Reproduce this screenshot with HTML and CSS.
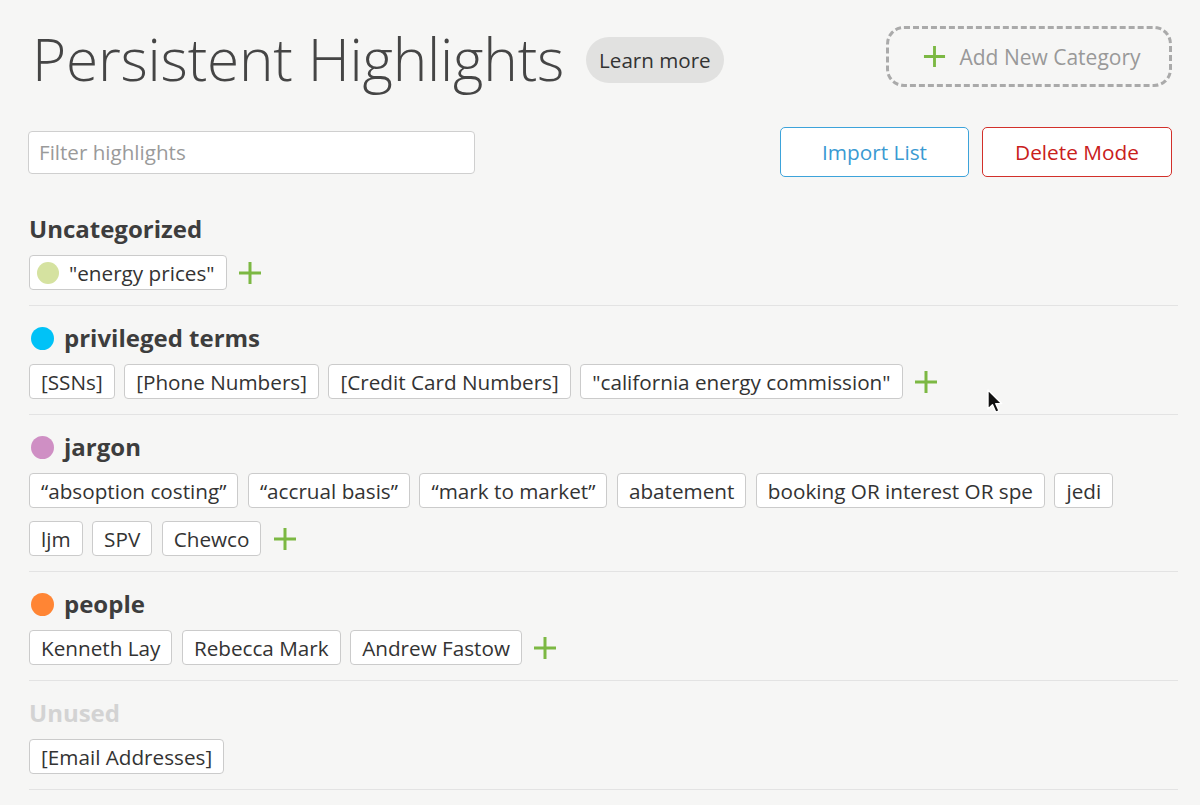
FILE: index.html
```html
<!DOCTYPE html>
<html>
<head>
<meta charset="utf-8">
<link rel="stylesheet" href="styles.css">
</head>
<body>
<div class="page">
  <header class="header">
    <h1 class="title">Persistent Highlights</h1>
    <button class="learn">Learn more</button>
    <div class="spacer"></div>
    <button class="add-cat">
      <svg class="plus" width="24" height="24" viewBox="0 0 24 24"><path d="M12 1v22M1 12h22" stroke="#7cb843" stroke-width="3" fill="none"/></svg>
      <span>Add New Category</span>
    </button>
  </header>

  <div class="toolbar">
    <input class="filter" type="text" placeholder="Filter highlights">
    <div class="spacer"></div>
    <button class="btn btn-import">Import List</button>
    <button class="btn btn-delete">Delete Mode</button>
  </div>

  <section class="section first">
    <h2 class="cat">Uncategorized</h2>
    <div class="tags">
      <span class="tag"><span class="tag-dot" style="background:#d5e2a0"></span>"energy prices"</span>
      <span class="add"><svg width="24" height="24" viewBox="0 0 24 24"><path d="M12 1v22M1 12h22" stroke="#7cb843" stroke-width="3" fill="none"/></svg></span>
    </div>
  </section>

  <section class="section">
    <h2 class="cat"><span class="dot" style="background:#00c2f7"></span>privileged terms</h2>
    <div class="tags">
      <span class="tag">[SSNs]</span>
      <span class="tag">[Phone Numbers]</span>
      <span class="tag">[Credit Card Numbers]</span>
      <span class="tag">"california energy commission"</span>
      <span class="add"><svg width="24" height="24" viewBox="0 0 24 24"><path d="M12 1v22M1 12h22" stroke="#7cb843" stroke-width="3" fill="none"/></svg></span>
    </div>
  </section>

  <section class="section">
    <h2 class="cat"><span class="dot" style="background:#cf8fc4"></span>jargon</h2>
    <div class="tags">
      <span class="tag">“absoption costing”</span>
      <span class="tag">“accrual basis”</span>
      <span class="tag">“mark to market”</span>
      <span class="tag">abatement</span>
      <span class="tag">booking OR interest OR spe</span>
      <span class="tag">jedi</span>
      <span class="tag">ljm</span>
      <span class="tag">SPV</span>
      <span class="tag">Chewco</span>
      <span class="add"><svg width="24" height="24" viewBox="0 0 24 24"><path d="M12 1v22M1 12h22" stroke="#7cb843" stroke-width="3" fill="none"/></svg></span>
    </div>
  </section>

  <section class="section">
    <h2 class="cat"><span class="dot" style="background:#ff8534"></span>people</h2>
    <div class="tags">
      <span class="tag">Kenneth Lay</span>
      <span class="tag">Rebecca Mark</span>
      <span class="tag">Andrew Fastow</span>
      <span class="add"><svg width="24" height="24" viewBox="0 0 24 24"><path d="M12 1v22M1 12h22" stroke="#7cb843" stroke-width="3" fill="none"/></svg></span>
    </div>
  </section>

  <section class="section">
    <h2 class="cat unused">Unused</h2>
    <div class="tags">
      <span class="tag">[Email Addresses]</span>
    </div>
  </section>
</div>

<svg class="cursor" width="20" height="26" viewBox="0 0 20 26">
  <path d="M2 1 L2 20 L6.5 15.8 L9.8 23.2 L13 21.8 L9.8 14.6 L15.6 14.6 Z" fill="#111" stroke="#fff" stroke-width="1.4" stroke-linejoin="round"/>
</svg>
</body>
</html>
```

FILE: styles.css
```css
* { box-sizing: border-box; }

html, body {
  margin: 0;
  padding: 0;
  background: #f6f6f5;
  font-family: "Open Sans", "Liberation Sans", sans-serif;
  color: #333;
}

.page {
  padding: 0 22px 0 29px;
  width: 1200px;
}

.spacer { flex: 1; }

.header {
  display: flex;
  align-items: center;
  height: 113px;
  margin-right: 6px;
}

.title {
  margin: 0 22px 0 3px;
  font-weight: 300;
  font-size: 58.5px;
  line-height: 1;
  color: #454545;
  letter-spacing: -0.2px;
  position: relative;
  top: 2px;
}

.learn {
  font-family: inherit;
  font-size: 20.6px;
  color: #333;
  background: #e1e1e0;
  border: none;
  border-radius: 23px;
  height: 46px;
  padding: 0 13px;
  position: relative;
  top: 3px;
}

.add-cat {
  font-family: inherit;
  display: flex;
  align-items: center;
  gap: 13px;
  width: 286px;
  height: 61px;
  justify-content: center;
  border: 3px dashed #aaaaaa;
  border-radius: 18px;
  background: transparent;
  font-size: 21px;
  color: #999;
  padding: 0 0 0 6px;
}

.add-cat .plus { width: 23px; height: 23px; }

.toolbar {
  display: flex;
  align-items: center;
  gap: 13px;
  height: 50px;
  margin-top: 14px;
  margin-right: 6px;
}

.filter {
  width: 447px;
  height: 43px;
  margin-left: -1px;
  border: 1px solid #cfcfcf;
  border-radius: 4px;
  background: #fff;
  font-family: inherit;
  font-size: 20.6px;
  padding: 0 10px;
  color: #333;
}

.filter::placeholder { color: #9a9a9a; }

.btn {
  font-family: inherit;
  font-size: 20.8px;
  width: 190px;
  height: 50px;
  border-radius: 5px;
  background: #fff;
  border: 1px solid;
}

.btn-import { border-color: #3da3da; color: #3a9ad2; width: 189px; }
.btn-delete { border-color: #d2302a; color: #c9201b; }

.section {
  border-bottom: 1px solid #e3e3e3;
  padding: 17px 0 15px;
}

.section.first { padding-top: 37px; }

.cat {
  margin: 0;
  font-size: 24px;
  font-weight: 700;
  line-height: 30px;
  height: 30px;
  color: #3d3d3d;
  display: flex;
  align-items: center;
  gap: 10px;
}

.cat.unused { color: #d3d3d3; }

.dot {
  width: 23px;
  height: 23px;
  border-radius: 50%;
  margin-left: 2px;
  flex: none;
}

.tags {
  display: flex;
  flex-wrap: wrap;
  align-items: center;
  column-gap: 9.5px;
  row-gap: 13px;
  margin-top: 11px;
  padding-right: 20px;
}

.tag {
  display: inline-flex;
  align-items: center;
  height: 35px;
  padding: 0 11px;
  border: 1px solid #cbcbcb;
  border-radius: 4px;
  background: #fff;
  font-size: 20.7px;
  color: #333;
  white-space: nowrap;
}

.tag-dot {
  width: 22px;
  height: 22px;
  border-radius: 50%;
  margin: 0 10px 0 -4px;
}

.add {
  display: inline-flex;
  align-items: center;
  margin-left: 2px;
}

.add svg { width: 24px; height: 24px; }

.cursor {
  position: absolute;
  left: 986px;
  top: 389px;
}
```
